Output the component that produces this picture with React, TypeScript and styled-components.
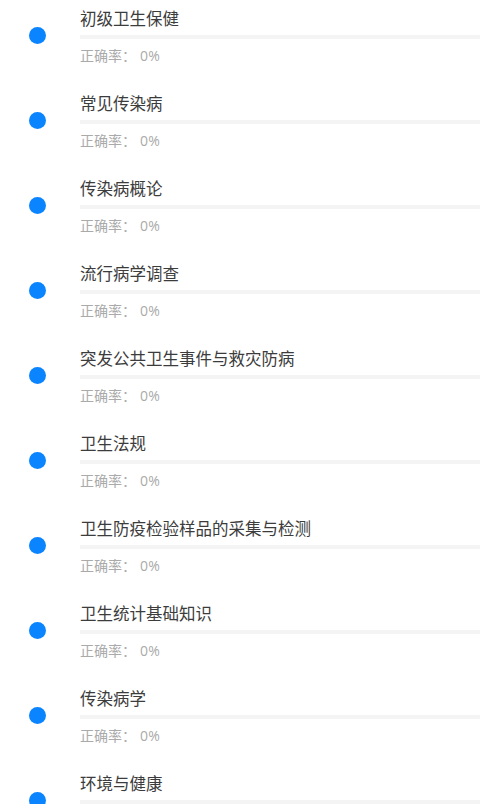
import React from 'react';
import styled, { createGlobalStyle } from 'styled-components';

const CHAPTERS = [
	'初级卫生保健',
	'常见传染病',
	'传染病概论',
	'流行病学调查',
	'突发公共卫生事件与救灾防病',
	'卫生法规',
	'卫生防疫检验样品的采集与检测',
	'卫生统计基础知识',
	'传染病学',
	'环境与健康',
];

const GlobalStyle = createGlobalStyle`
	html, body {
		margin: 0;
		padding: 0;
		background: #ffffff;
		overflow: hidden;
	}
	body {
		font-family: "Noto Sans CJK SC", "Noto Sans", sans-serif;
	}
`;

const List = styled.div`
	display: flex;
	flex-direction: column;
	width: 480px;
`;

const Row = styled.div`
	display: flex;
	height: 85px;
	box-sizing: border-box;
	padding-top: 6px;
`;

const DotColumn = styled.div`
	width: 80px;
	flex-shrink: 0;
	display: flex;
	justify-content: center;
	padding-top: 21px;
	box-sizing: border-box;
`;

const Dot = styled.span`
	width: 17px;
	height: 17px;
	border-radius: 50%;
	background: #0a84ff;
	margin-right: 5px;
`;

const Content = styled.div`
	flex: 1;
	display: flex;
	flex-direction: column;
`;

const Title = styled.div`
	font-size: 16.5px;
	line-height: 24px;
	color: #3c3c3c;
	white-space: nowrap;
`;

const Bar = styled.div`
	height: 4px;
	margin-top: 5px;
	background: #f4f4f4;
`;

const Rate = styled.div`
	margin-top: 6px;
	font-size: 14px;
	line-height: 20px;
	color: #aaaaaa;
	white-space: nowrap;
`;

const Percent = styled.span`
	font-family: "Open Sans", "Noto Sans", sans-serif;
	letter-spacing: 0.3px;
	margin-left: 4px;
`;

const App = () => (
	<>
		<GlobalStyle />
		<List>
			{CHAPTERS.map((name) => (
				<Row key={name}>
					<DotColumn>
						<Dot />
					</DotColumn>
					<Content>
						<Title>{name}</Title>
						<Bar />
						<Rate>
							正确率：<Percent>0%</Percent>
						</Rate>
					</Content>
				</Row>
			))}
		</List>
	</>
);

export default App;
